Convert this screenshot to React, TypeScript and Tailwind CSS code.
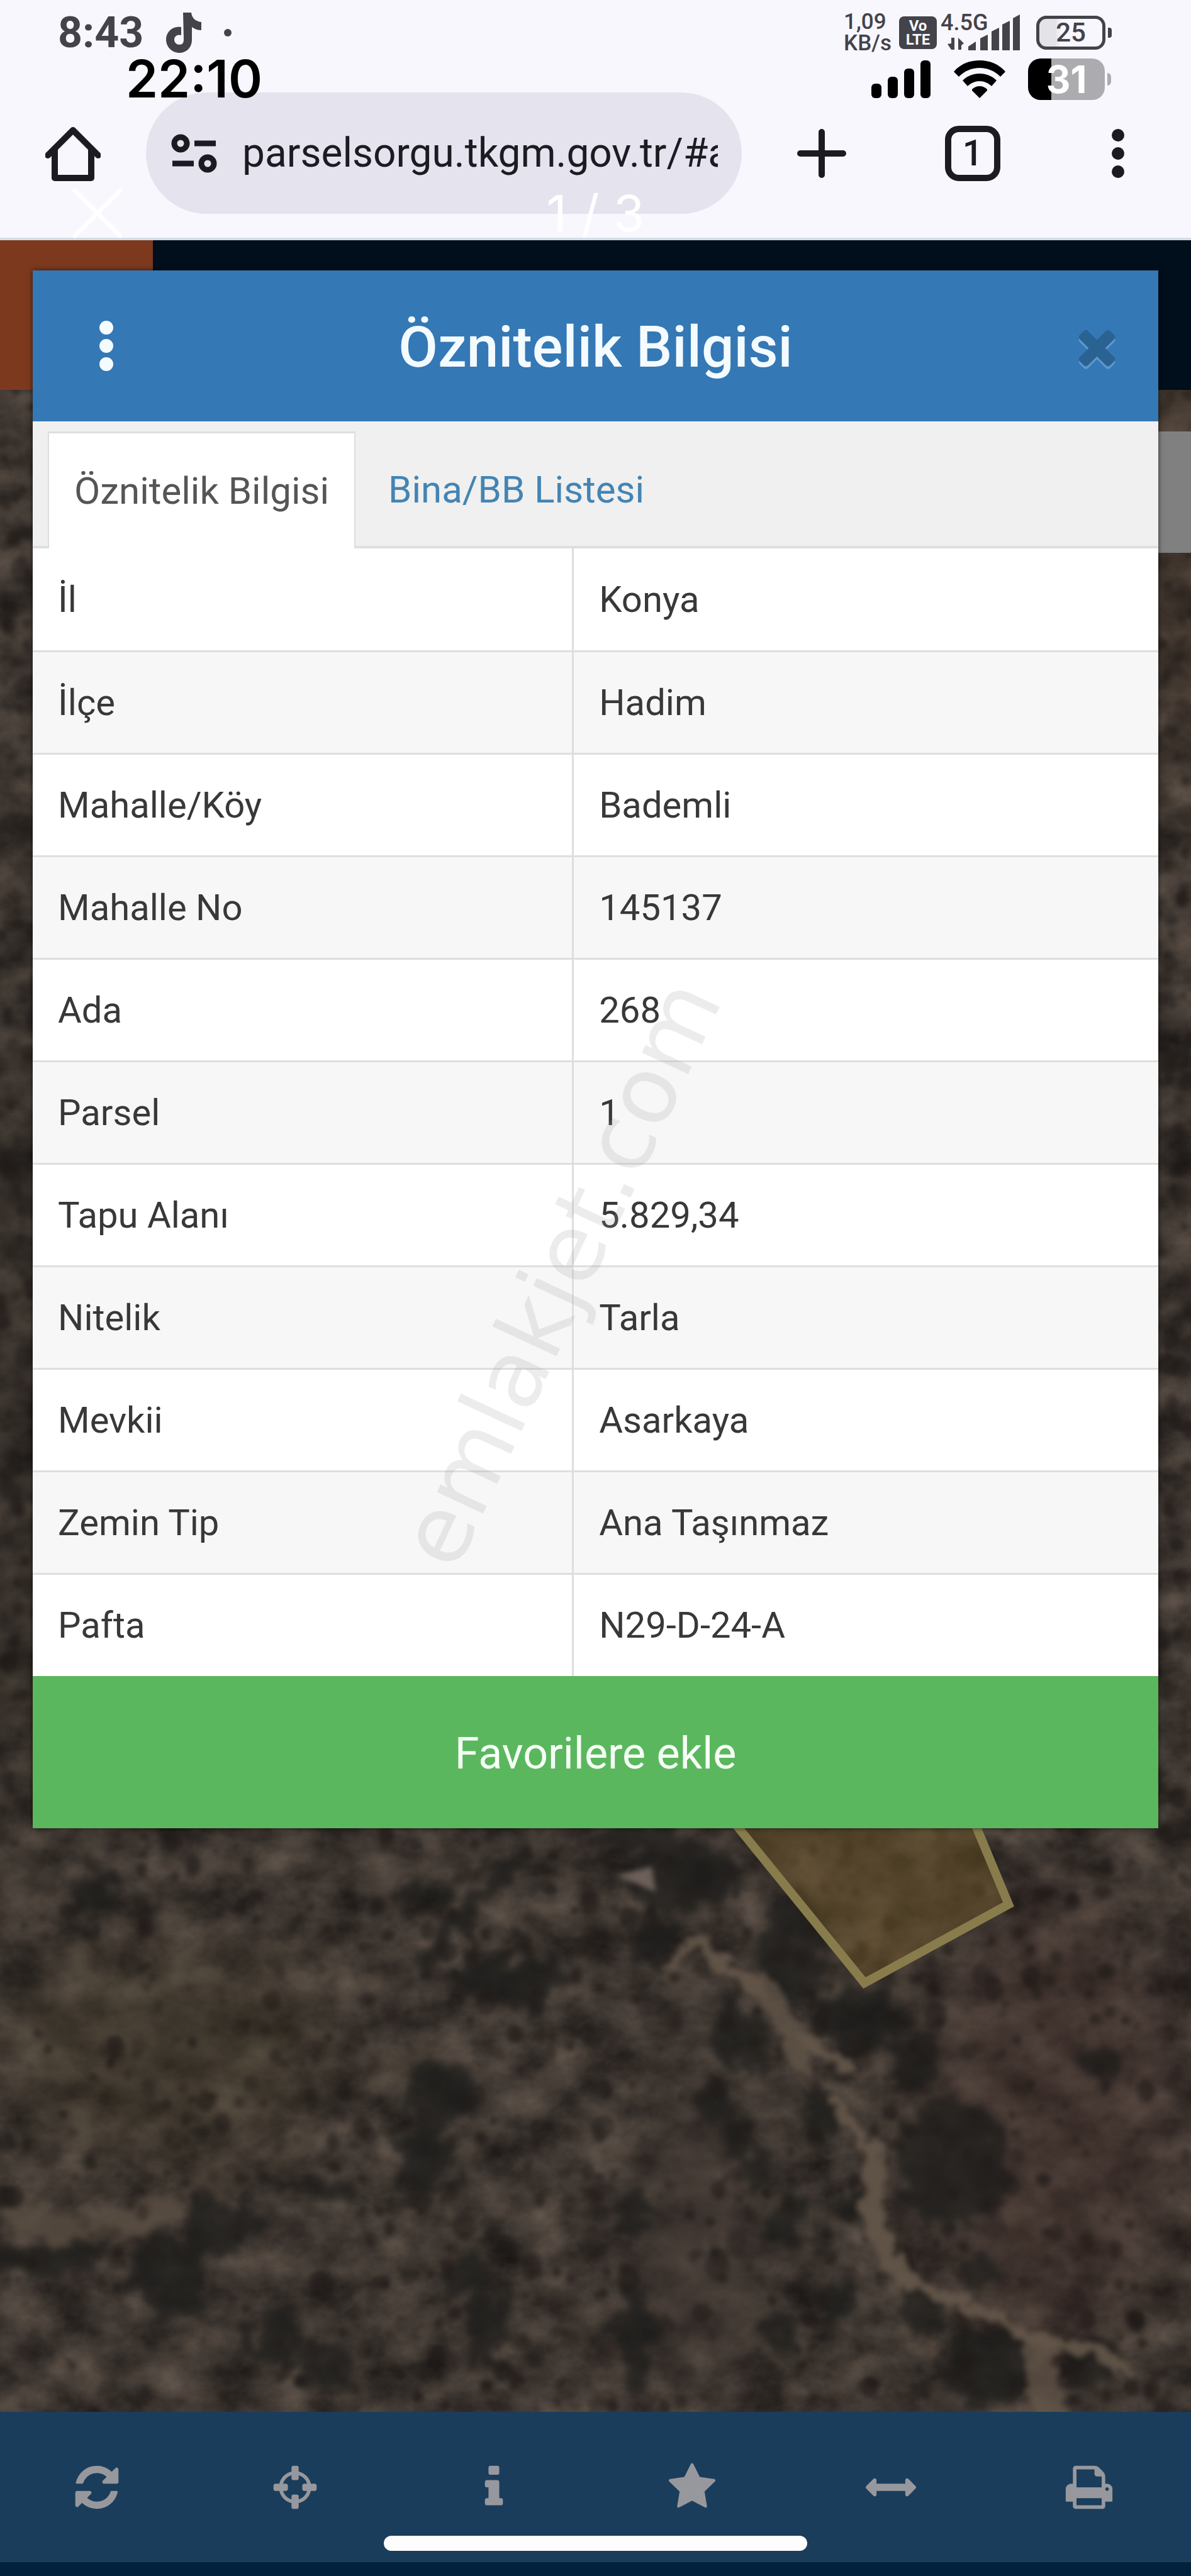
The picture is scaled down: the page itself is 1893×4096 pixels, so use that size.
import type { ReactNode } from "react";

const rows = [
    ["İl", "Konya"],
    ["İlçe", "Hadim"],
    ["Mahalle/Köy", "Bademli"],
    ["Mahalle No", "145137"],
    ["Ada", "268"],
    ["Parsel", "1"],
    ["Tapu Alanı", "5.829,34"],
    ["Nitelik", "Tarla"],
    ["Mevkii", "Asarkaya"],
    ["Zemin Tip", "Ana Taşınmaz"],
    ["Pafta", "N29-D-24-A"],
];

const tools = [
    {
        label: "Yenile",
        path: "M1639 1056q0 5-1 7-64 268-268 434.5t-478 166.5q-146 0-282.5-55t-243.5-157l-129 129q-19 19-45 19t-45-19-19-45v-448q0-26 19-45t45-19h448q26 0 45 19t19 45-19 45l-137 137q71 66 161 102t187 36q134 0 250-65t186-179q11-17 53-117 8-23 30-23h192q13 0 22.5 9.5t9.5 22.5zm25-800v448q0 26-19 45t-45 19h-448q-26 0-45-19t-19-45 19-45l138-138q-148-137-349-137-134 0-250 65t-186 179q-11 17-53 117-8 23-30 23h-199q-13 0-22.5-9.5t-9.5-22.5v-7q65-268 270-434.5t480-166.5q146 0 284 55.5t245 156.5l130-129q19-19 45-19t45 19 19 45z",
    },
    {
        label: "Konum",
        path: "M1325 1024h-109q-26 0-45-19t-19-45v-128q0-26 19-45t45-19h109q-32-108-112.5-188.5t-188.5-112.5v109q0 26-19 45t-45 19h-128q-26 0-45-19t-19-45v-109q-108 32-188.5 112.5t-112.5 188.5h109q26 0 45 19t19 45v128q0 26-19 45t-45 19h-109q32 108 112.5 188.5t188.5 112.5v-109q0-26 19-45t45-19h128q26 0 45 19t19 45v109q108-32 188.5-112.5t112.5-188.5zm339-192v128q0 26-19 45t-45 19h-143q-37 161-154.5 278.5t-278.5 154.5v143q0 26-19 45t-45 19h-128q-26 0-45-19t-19-45v-143q-161-37-278.5-154.5t-154.5-278.5h-143q-26 0-45-19t-19-45v-128q0-26 19-45t45-19h143q37-161 154.5-278.5t278.5-154.5v-143q0-26 19-45t45-19h128q26 0 45 19t19 45v143q161 37 278.5 154.5t154.5 278.5h143q26 0 45 19t19 45z",
    },
    {
        label: "Bilgi",
        path: "M1216 1344v128q0 26-19 45t-45 19h-512q-26 0-45-19t-19-45v-128q0-26 19-45t45-19h64v-384h-64q-26 0-45-19t-19-45v-128q0-26 19-45t45-19h384q26 0 45 19t19 45v576h64q26 0 45 19t19 45zm-128-1152v192q0 26-19 45t-45 19h-256q-26 0-45-19t-19-45v-192q0-26 19-45t45-19h256q26 0 45 19t19 45z",
    },
    {
        label: "Favoriler",
        path: "M1728 647q0 22-26 48l-363 354 86 500q1 7 1 20 0 21-10.5 35.5t-30.5 14.5q-19 0-40-12l-449-236-449 236q-22 12-40 12-21 0-31.5-14.5t-10.5-35.5q0-6 2-20l86-500-364-354q-25-27-25-48 0-37 56-46l502-73 225-455q19-41 49-41t49 41l225 455 502 73q56 9 56 46z",
    },
    {
        label: "Ölçüm",
        path: "M1792 896q0 26-19 45l-256 256q-19 19-45 19t-45-19-19-45v-128h-1024v128q0 26-19 45t-45 19-45-19l-256-256q-19-19-19-45t19-45l256-256q19-19 45-19t45 19 19 45v128h1024v-128q0-26 19-45t45-19 45 19l256 256q19 19 19 45z",
    },
    {
        label: "Yazdır",
        path: "M448 1536h896v-256h-896v256zm0-640h896v-384h-160q-40 0-68-28t-28-68v-160h-640v640zm1152 64q0-26-19-45t-45-19-45 19-19 45 19 45 45 19 45-19 19-45zm128 0v416q0 13-9.5 22.5t-22.5 9.5h-224v160q0 40-28 68t-68 28h-960q-40 0-68-28t-28-68v-160h-224q-13 0-22.5-9.5t-9.5-22.5v-416q0-79 56.5-135.5t135.5-56.5h64v-544q0-40 28-68t68-28h672q40 0 88 20t76 48l152 152q28 28 48 76t20 88v256h64q79 0 135.5 56.5t56.5 135.5z",
    },
];

const timesPath =
    "M1490 1322q0 40-28 68l-136 136q-28 28-68 28t-68-28l-294-294-294 294q-28 28-68 28t-68-28l-136-136q-28-28-28-68t28-68l294-294-294-294q-28-28-28-68t28-68l136-136q28-28 68-28t68 28l294 294 294-294q28-28 68-28t68 28l136 136q28 28 28 68t-28 68l-294 294 294 294q28 28 28 68z";

// Small seeded generator so the shrubs stay in place between renders
function makeShrubs(count: number) {
    let seed = 48271;
    const next = () => {
        seed = (seed * 16807) % 2147483647;
        return seed / 2147483647;
    };
    return Array.from({ length: count }, (_, i) => {
        const side = i % 4 === 0;
        const x = side ? (next() < 0.5 ? next() * 60 : 1833 + next() * 60) : next() * 1893;
        const y = side ? next() * 2300 : 2270 + next() * 945;
        const r = 5 + next() * next() * 16;
        return { x, y, r, ry: r * (0.8 + next() * 0.6), o: 0.2 + next() * 0.5 };
    });
}

const shrubs = makeShrubs(1200);

const darkPatches = [
    [1085, 2363, 90, 54],
    [1010, 2300, 70, 26],
    [1260, 2480, 50, 86],
    [1369, 2589, 70, 50],
    [1453, 2655, 38, 40],
    [1513, 2821, 92, 104],
    [1175, 2619, 42, 60],
    [1139, 2726, 30, 30],
    [1170, 2775, 26, 34],
    [1308, 2744, 30, 40],
    [1344, 2887, 30, 26],
    [1248, 2911, 24, 54],
    [1562, 2988, 36, 26],
    [1326, 3036, 28, 30],
    [1465, 3053, 34, 36],
    [1574, 3143, 74, 66],
    [1737, 3137, 44, 40],
    [1006, 3101, 36, 80],
    [1006, 2905, 30, 42],
    [1236, 3083, 32, 30],
    [1040, 2470, 36, 36],
    [1205, 2833, 26, 36],
    [1743, 2667, 28, 24],
    [700, 2714, 60, 60],
    [670, 2810, 40, 60],
    [815, 2530, 100, 40],
    [350, 2917, 60, 44],
    [270, 3000, 60, 70],
    [70, 2970, 90, 26],
    [440, 3100, 40, 54],
    [520, 3150, 50, 34],
    [530, 2860, 50, 24],
    [740, 3000, 40, 30],
    [670, 2390, 40, 24],
    [150, 2385, 40, 24],
    [780, 3080, 30, 60],
];

function SatelliteMap() {
    return (
        <svg className="absolute inset-x-0 bottom-0 h-full w-full" viewBox="0 0 1893 3215" preserveAspectRatio="xMidYMax slice" aria-hidden="true">
            <defs>
                <filter id="ground" x="0" y="0" width="100%" height="100%" colorInterpolationFilters="sRGB">
                    <feTurbulence type="fractalNoise" baseFrequency="0.012 0.016" numOctaves="5" seed="8" />
                    <feColorMatrix values="0.34 0 0 0 0.075  0.30 0 0 0 0.065  0.26 0 0 0 0.063  0 0 0 0 1" />
                </filter>
                <filter id="soft3" colorInterpolationFilters="sRGB">
                    <feGaussianBlur stdDeviation="4" />
                </filter>
                <filter id="rough" x="-20%" y="-20%" width="140%" height="140%" colorInterpolationFilters="sRGB">
                    <feTurbulence type="fractalNoise" baseFrequency="0.03" numOctaves="3" seed="3" result="noise" />
                    <feDisplacementMap in="SourceGraphic" in2="noise" scale="70" xChannelSelector="R" yChannelSelector="G" />
                    <feGaussianBlur stdDeviation="6" />
                </filter>
                <filter id="trail" x="-20%" y="-20%" width="140%" height="140%" colorInterpolationFilters="sRGB">
                    <feTurbulence type="fractalNoise" baseFrequency="0.04" numOctaves="3" seed="5" result="noise" />
                    <feDisplacementMap in="SourceGraphic" in2="noise" scale="34" xChannelSelector="R" yChannelSelector="G" />
                    <feGaussianBlur stdDeviation="4" />
                </filter>
                <filter id="soft60" x="-50%" y="-50%" width="200%" height="200%" colorInterpolationFilters="sRGB">
                    <feGaussianBlur stdDeviation="60" />
                </filter>
            </defs>
            <rect width="1893" height="3215" fill="#3e3630" />
            <rect width="1893" height="3215" filter="url(#ground)" />
            <g filter="url(#soft60)">
                <ellipse cx="1680" cy="2750" rx="200" ry="350" fill="#48332e" opacity="0.45" />
                <ellipse cx="1110" cy="2940" rx="80" ry="200" fill="#433a34" opacity="0.8" />
                <ellipse cx="260" cy="2640" rx="260" ry="160" fill="#463f2d" opacity="0.4" />
                <ellipse cx="1870" cy="200" rx="50" ry="460" fill="#5a4636" opacity="0.5" />
                <ellipse cx="10" cy="1700" rx="50" ry="800" fill="#27231e" opacity="0.5" />
            </g>
            <g filter="url(#rough)" fill="none" stroke="#5a4e42" strokeLinecap="round">
                <path d="M30 2900q60 36 120 24t110-30" strokeWidth="44" opacity="0.75" />
                <path d="M310 2850l90-10 80-50" strokeWidth="34" opacity="0.4" />
                <path d="M600 2700l60-60" strokeWidth="36" opacity="0.3" />
            </g>
            <g filter="url(#rough)" fill="#1d1d1b" opacity="0.72">
                {darkPatches.map(([cx, cy, rx, ry]) => (
                    <ellipse key={`${cx}-${cy}`} cx={cx} cy={cy} rx={rx} ry={ry} />
                ))}
                <path d="M845 2322l-90 80-85 110" fill="none" stroke="#1d1d1b" strokeWidth="26" />
            </g>
            <g filter="url(#soft3)">
                {shrubs.map((s, i) => (
                    <ellipse key={i} cx={s.x} cy={s.y} rx={s.r} ry={s.ry} fill="#1f1a18" opacity={s.o} />
                ))}
                <path d="M980 2362l56-14 6 40z" fill="#6c6059" />
            </g>
            <g filter="url(#trail)" fill="none" stroke="#65574a" strokeLinecap="round" strokeLinejoin="round" opacity="0.9">
                <path d="M1068 2508l30-40 24 6 20 24 40 24 30 26" strokeWidth="18" />
                <path d="M1200 2530l30 40 30 40 10 50" strokeWidth="36" opacity="0.8" />
                <path d="M1270 2620l40 20 40 30" strokeWidth="16" />
                <path d="M1326 2716l26 40 20 30" strokeWidth="16" />
                <path d="M1390 2800l-4 100 20 60 40 46" strokeWidth="34" />
                <path d="M1446 3006l60 30 60 20 60 36 60 16 70 14 40 40" strokeWidth="18" />
                <path d="M1650 3120l20 100" strokeWidth="50" opacity="0.8" />
            </g>
            <path d="M937 1995L1374 2533 1603 2408 1450 2040z" fill="#6b5428" fillOpacity="0.5" stroke="#887c4c" strokeWidth="14" />
        </svg>
    );
}

function SignalBars({ className }: { className: string }) {
    return (
        <svg className={className} viewBox="0 0 95 60" aria-hidden="true">
            <rect x="0" y="37" width="16" height="23" rx="6" />
            <rect x="26" y="26" width="16" height="34" rx="6" />
            <rect x="52" y="13" width="16" height="47" rx="6" />
            <rect x="78" y="0" width="16" height="60" rx="6" />
        </svg>
    );
}

function Wifi() {
    return (
        <svg className="h-[60px] w-[82px]" viewBox="0 0 82 60" aria-hidden="true">
            <path d="M41 0C57 0 72 6 82 18L74 26C65 17 54 12 41 12S17 17 8 26L0 18C10 6 25 0 41 0z" />
            <path d="M41 21c11 0 20 4 27 11l-8 9c-5-5-12-8-19-8s-14 3-19 8l-8-9c7-7 16-11 27-11z" />
            <path d="M41 41c5 0 9 2 12 5v2L41 60 29 48v-2c3-3 7-5 12-5z" />
        </svg>
    );
}

function CarrierStatus() {
    return (
        <div className="flex h-[104px] items-center justify-between pr-[126px] pl-[92px] text-[#444349]">
            <div className="flex items-center">
                <span className="text-[68px] leading-none font-bold">8:43</span>
                <svg className="ml-9 h-16 w-14" viewBox="0 0 56 64" aria-hidden="true">
                    <path d="M27 0h13c1 8 6 14 16 15v13c-6 0-11-2-15-5v20c0 13-9 21-20 21S0 55 0 43c0-13 11-22 24-20v13c-6-2-11 2-11 7 0 4 3 8 8 8s7-3 7-8z" fill="currentColor" />
                </svg>
                <span className="ml-9 size-3 rounded-full bg-[#444349]" />
            </div>
            <div className="flex items-center">
                <div className="text-[35px] leading-[34px] font-medium">
                    <div>1,09</div>
                    <div>KB/s</div>
                </div>
                <div className="ml-3 flex h-[52px] w-[60px] flex-col items-center justify-center rounded-lg bg-[#444349] text-[24px] leading-[22px] font-bold text-[#f8f7fe]">
                    <span>Vo</span>
                    <span>LTE</span>
                </div>
                <div className="relative ml-1.5 h-[60px] w-[126px]">
                    <span className="absolute -top-1 left-0 text-[36px] leading-9 font-medium">4.5G</span>
                    <svg className="size-full" viewBox="0 0 126 60" fill="currentColor" aria-hidden="true">
                        <path d="M22 38v19h-5l-6-9 6-1v-9zM28 38l9 9-4 3v7h-5z" />
                        <path d="M44 58V52l12-8v14z" />
                        <path d="M63 58V39l12-6v25z" />
                        <path d="M81 58V28l12-6v36z" />
                        <path d="M98 58V17l12-6v47z" />
                        <path d="M115 58V7l11-6v57z" />
                    </svg>
                </div>
                <div className="ml-[26px] flex h-[54px] w-[110px] items-center justify-center rounded-[16px] border-[5px] border-[#444349] bg-linear-to-r from-[#e4e3e8] from-25% to-[#f8f7fe] to-35% text-[42px] leading-none font-medium">
                    25
                </div>
                <span className="ml-1 h-4 w-1.5 rounded-r bg-[#444349]" />
            </div>
        </div>
    );
}

function DeviceOverlay() {
    return (
        <div className="pointer-events-none absolute inset-x-0 top-0 font-['Inter',sans-serif]">
            <div className="flex items-center justify-between pt-[86px] pr-[127px] pl-[200px] text-black">
                <span className="text-[82px] leading-20 font-semibold">22:10</span>
                <div className="flex items-center">
                    <SignalBars className="h-[60px] w-[95px]" />
                    <div className="ml-9">
                        <Wifi />
                    </div>
                    <div className="ml-9 flex h-[66px] w-[122px] items-center justify-center rounded-[20px] bg-linear-to-r from-black from-30% to-[#acabb0] to-30% text-[60px] leading-none font-bold text-white">
                        31
                    </div>
                    <span className="ml-1 h-5 w-1.5 rounded-r-full bg-[#acabb0]" />
                </div>
            </div>
            <div className="relative mt-[124px] flex h-[98px] items-center justify-center text-[80px] leading-none text-white">
                <svg className="absolute left-[115px] size-20" viewBox="0 0 80 80" fill="none" stroke="currentColor" strokeWidth="7" strokeLinecap="round" aria-hidden="true">
                    <path d="M4 4l72 72M76 4L4 76" />
                </svg>
                <span>1 / 3</span>
            </div>
        </div>
    );
}

function IconButton({ label, className, children }: { label: string; className: string; children: ReactNode }) {
    return (
        <button type="button" aria-label={label} className={className}>
            {children}
        </button>
    );
}

function BrowserBar() {
    return (
        <div className="mt-[43px] mb-[38px] flex items-center pr-[105px] pl-[72px] text-[#1c1b22]">
            <IconButton label="Ana sayfa" className="size-[88px]">
                <svg viewBox="0 0 88 88" fill="none" stroke="currentColor" strokeWidth="10" strokeLinejoin="round" aria-hidden="true">
                    <path d="M4 47L44 7l40 40" strokeLinecap="round" />
                    <path d="M15 38v45h58V38" />
                </svg>
            </IconButton>
            <div className="ml-18 flex h-[193px] min-w-0 flex-1 items-center rounded-full bg-[#e5e3ee] pr-[38px] pl-10">
                <svg className="h-[62px] w-[73px] shrink-0" viewBox="0 0 73 62" fill="none" stroke="currentColor" strokeWidth="9" aria-hidden="true">
                    <circle cx="15" cy="15" r="10" />
                    <path d="M37 15h34M2 47h34" />
                    <circle cx="58" cy="47" r="10" />
                </svg>
                <input
                    aria-label="Adres"
                    className="ml-10 min-w-0 flex-1 bg-transparent p-0 text-[64px] leading-20 outline-none"
                    defaultValue="parselsorgu.tkgm.gov.tr/#a"
                />
            </div>
            <IconButton label="Yeni sekme" className="ml-[87px] size-20">
                <svg viewBox="0 0 80 80" stroke="currentColor" strokeWidth="10" strokeLinecap="round" aria-hidden="true">
                    <path d="M40 6v68M6 40h68" />
                </svg>
            </IconButton>
            <button type="button" className="ml-[156px] size-[88px] rounded-[22px] border-[10px] border-[#1c1b22] text-[57px] leading-none font-medium">
                1
            </button>
            <IconButton label="Menü" className="ml-44 h-20 w-[22px]">
                <svg viewBox="0 0 22 80" fill="currentColor" aria-hidden="true">
                    <circle cx="11" cy="11" r="10" />
                    <circle cx="11" cy="40" r="10" />
                    <circle cx="11" cy="69" r="10" />
                </svg>
            </IconButton>
        </div>
    );
}

function ParcelDialog() {
    return (
        <section className="relative bg-white shadow-[0_0_8px_rgba(0,0,0,0.6)]">
            <header className="flex h-60 items-center justify-between bg-[#3478b6] pr-[54px] pl-[105px] text-[#f4fbff]">
                <IconButton label="Seçenekler" className="h-20 w-9">
                    <svg className="h-20 w-6" viewBox="0 0 24 80" fill="currentColor" aria-hidden="true">
                        <circle cx="12" cy="11" r="11" />
                        <circle cx="12" cy="40" r="11" />
                        <circle cx="12" cy="69" r="11" />
                    </svg>
                </IconButton>
                <h1 className="pt-1 text-[91px] leading-none font-medium">Öznitelik Bilgisi</h1>
                <IconButton label="Kapat" className="size-[87px]">
                    <svg viewBox="0 0 1792 1792" aria-hidden="true">
                        <path d={timesPath} fill="#5e97cc" transform="translate(0 90)" />
                        <path d={timesPath} fill="#2a6292" />
                    </svg>
                </IconButton>
            </header>
            <nav className="flex h-[202px] items-end border-b-4 border-[#dfdfdf] bg-[#f0f0f0] pl-6 text-[60px]">
                <a href="#oznitelik" className="-mb-1 flex h-[186px] items-center border-x-2 border-t-3 border-[#dedede] bg-white px-10 text-[#555]">
                    Öznitelik Bilgisi
                </a>
                <a href="#bina" className="-mb-1 flex h-[186px] items-center px-[52px] text-[#4484b3]">
                    Bina/BB Listesi
                </a>
            </nav>
            <table className="w-full table-fixed border-collapse text-[58px] leading-20 text-[#383838]">
                <tbody>
                    {rows.map(([label, value]) => (
                        <tr key={label} className="border-b-3 border-[#dedede] last:border-b-0 even:bg-[#f7f7f7]">
                            <th scope="row" className="h-[163px] w-[48%] border-r-3 border-[#dedede] px-10 text-left font-normal">
                                {label}
                            </th>
                            <td className="px-10">{value}</td>
                        </tr>
                    ))}
                </tbody>
            </table>
            <button type="button" className="h-[242px] w-full bg-[#5bb75e] pt-1 text-[70px] text-[#f6fff6]">
                Favorilere ekle
            </button>
        </section>
    );
}

export default function App() {
    return (
        <div className="relative flex min-h-screen flex-col overflow-hidden bg-[#3e3630] font-['Roboto',sans-serif]">
            <div className="border-b-4 border-[#d3dde8] bg-[#f8f7fe]">
                <CarrierStatus />
                <BrowserBar />
            </div>

            <main className="relative flex-1 px-[52px] pt-12 pb-20">
                <div className="absolute inset-0 flex flex-col">
                    <div className="h-[238px] bg-[#000f1b]">
                        <div className="h-full w-[243px] bg-[#7d391e]" />
                    </div>
                    <div className="relative flex-1 overflow-hidden">
                        <SatelliteMap />
                        <div className="relative mt-[66px] ml-auto h-[193px] w-20 bg-[#808080]" />
                    </div>
                </div>
                <ParcelDialog />
            </main>

            <footer className="border-b-[22px] border-[#02223b] bg-[#1a3d5c]">
                <div className="grid h-[239px] grid-cols-6 items-center justify-items-center">
                    {tools.map((tool) => (
                        <IconButton key={tool.label} label={tool.label} className="mr-2 size-20">
                            <svg viewBox="0 0 1792 1792" fill="#97989d" aria-hidden="true">
                                <path d={tool.path} />
                            </svg>
                        </IconButton>
                    ))}
                </div>
            </footer>

            <DeviceOverlay />
            <div className="pointer-events-none absolute inset-0 flex items-center justify-center pr-28 pb-12">
                <span className="-rotate-65 font-['DejaVu_Sans',sans-serif] text-[148px] leading-none text-[#a0a0a0]/20">emlakjet.com</span>
            </div>
            <div className="pointer-events-none absolute inset-x-0 bottom-10 flex justify-center">
                <span className="h-6 w-[673px] rounded-full bg-[#fdfdfd]" />
            </div>
        </div>
    );
}
